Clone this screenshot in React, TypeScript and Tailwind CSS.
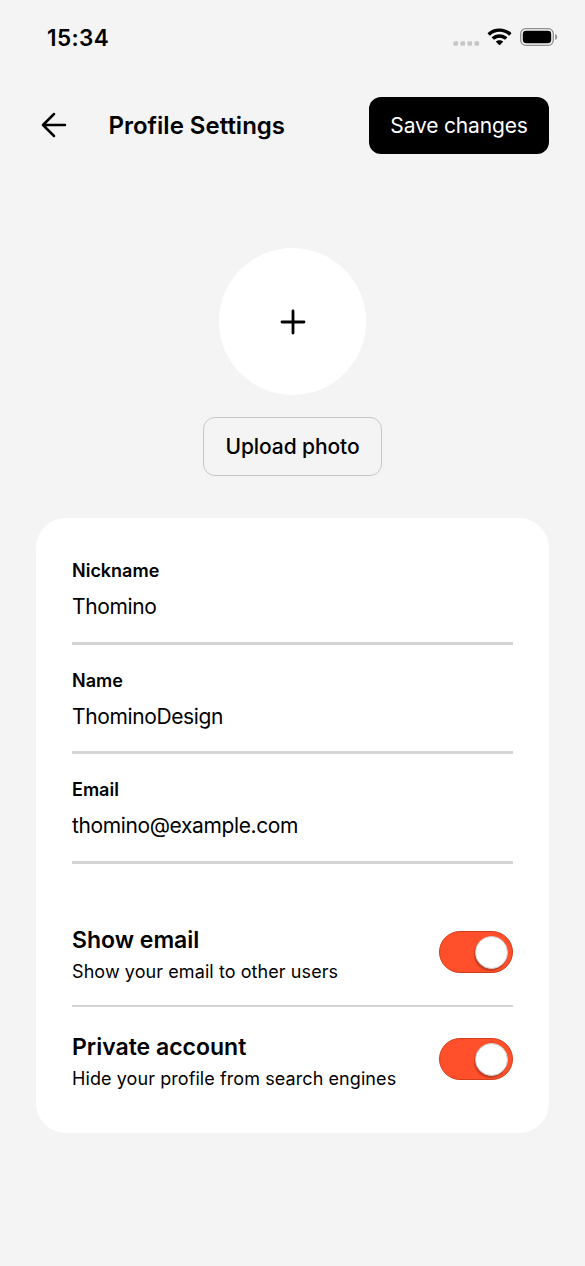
import React, { useState } from "react";

/* ---------------- TYPES ---------------- */

type Profile = {
  nickname: string;
  name: string;
  email: string;
};

/* ---------------- COMPONENT ---------------- */

export default function ProfileSettings() {
  const [profile, setProfile] = useState<Profile>({
    nickname: "Thomino",
    name: "ThominoDesign",
    email: "thomino@example.com",
  });
  const [showEmail, setShowEmail] = useState(true);
  const [privateAccount, setPrivateAccount] = useState(true);

  const update = (key: keyof Profile) => (value: string) =>
    setProfile((p) => ({ ...p, [key]: value }));

  return (
    <div className="flex min-h-screen w-full flex-col bg-[#f4f4f4] font-['Inter','Liberation_Sans',sans-serif] text-black">
      <StatusBar />

      <header className="mt-[22.5px] flex h-[57px] items-center pr-9 pl-[41px]">
        <button type="button" aria-label="Back">
          <BackIcon />
        </button>
        <h1 className="ml-[41.5px] pt-px text-[24px] leading-8 font-semibold whitespace-nowrap">
          Profile Settings
        </h1>
        <button
          type="button"
          className="ml-auto h-[57px] w-[180px] rounded-xl bg-black pt-px text-[21px] tracking-[-0.17px] whitespace-nowrap text-white"
        >
          Save changes
        </button>
      </header>

      <section className="mt-[94.5px] flex flex-col items-center">
        <button
          type="button"
          aria-label="Add photo"
          className="flex size-[147px] items-center justify-center rounded-full bg-white"
        >
          <PlusIcon />
        </button>
        <button
          type="button"
          className="mt-[22px] h-[59px] w-[179px] rounded-xl border-[1.5px] border-[#c8c8c8] text-[21px] font-medium tracking-[-0.1px] whitespace-nowrap"
        >
          Upload photo
        </button>
      </section>

      <main className="mx-9 mt-[42px] h-[615px] rounded-[30px] bg-white px-9 pt-[38px]">
        <Field
          label="Nickname"
          value={profile.nickname}
          onChange={update("nickname")}
        />
        <Field label="Name" value={profile.name} onChange={update("name")} />
        <Field label="Email" value={profile.email} onChange={update("email")} />

        <div className="mt-9">
          <ToggleRow
            title="Show email"
            description="Show your email to other users"
            checked={showEmail}
            onChange={setShowEmail}
          />
          <div className="h-[1.5px] bg-[#d4d4d4]" />
          <ToggleRow
            title="Private account"
            description="Hide your profile from search engines"
            checked={privateAccount}
            onChange={setPrivateAccount}
          />
        </div>
      </main>
    </div>
  );
}

/* ---------------- HELPERS ---------------- */

function Field({
  label,
  value,
  onChange,
}: {
  label: string;
  value: string;
  onChange: (v: string) => void;
}) {
  return (
    <label className="mb-[21px] flex h-[88.5px] flex-col border-b-[3px] border-[#d4d4d4]">
      <span className="h-[30px] text-[18px] leading-[30px] font-semibold">
        {label}
      </span>
      <input
        className="h-[41px] w-full bg-transparent text-[21px] tracking-[-0.38px] outline-none"
        value={value}
        onChange={(e) => onChange(e.target.value)}
      />
    </label>
  );
}

function ToggleRow({
  title,
  description,
  checked,
  onChange,
}: {
  title: string;
  description: string;
  checked: boolean;
  onChange: (v: boolean) => void;
}) {
  return (
    <div className="flex h-[105.5px] items-center justify-between">
      <div className="pt-[7px] whitespace-nowrap">
        <p className="text-[23px] leading-8 font-semibold">{title}</p>
        <p className="text-[18px] leading-8 tracking-[0.08px]">{description}</p>
      </div>
      <button
        type="button"
        role="switch"
        aria-checked={checked}
        aria-label={title}
        onClick={() => onChange(!checked)}
        className={`flex h-[42px] w-[74px] items-center rounded-full border px-[4px] ${
          checked
            ? "justify-end border-[#d33f1d] bg-[#ff4f2b]"
            : "border-[#bbbbbb] bg-[#d4d4d4]"
        }`}
      >
        <span className="size-[33px] rounded-full border border-[#cfcfcf] bg-white shadow-[-1px_2px_1px_rgba(0,0,0,0.22)]" />
      </button>
    </div>
  );
}

function StatusBar() {
  return (
    <div className="flex h-[74px] items-center pr-[27px] pl-[47px]">
      <span className="pt-px text-[22.5px] font-semibold tracking-[0.4px]">
        15:34
      </span>
      <div className="ml-auto flex items-center">
        <svg width="27" height="5" className="mt-[12px] mr-[7px]" fill="#c6c6c6">
          <rect x="0.5" y="0.2" width="4.6" height="4.6" rx="1.3" />
          <rect x="7.5" y="0.2" width="4.6" height="4.6" rx="1.3" />
          <rect x="14.5" y="0.2" width="4.6" height="4.6" rx="1.3" />
          <rect x="21.5" y="0.2" width="4.6" height="4.6" rx="1.3" />
        </svg>
        <svg width="25" height="18" viewBox="0 0 25 19" preserveAspectRatio="none">
          <path d="M12.5 0.5c4.6 0 8.8 1.8 11.8 4.7.2.2.2.5 0 .7l-1.8 1.9c-.2.2-.5.2-.7 0A13.4 13.4 0 0 0 3.2 7.8c-.2.2-.5.2-.7 0L.7 5.9c-.2-.2-.2-.5 0-.7A17 17 0 0 1 12.5 .5z" />
          <path d="M12.5 6.6c2.9 0 5.6 1.1 7.6 3 .2.2.2.5 0 .7l-1.9 1.9c-.2.2-.5.2-.7 0a7.3 7.3 0 0 0-10 0c-.2.2-.5.2-.7 0l-1.9-1.9c-.2-.2-.2-.5 0-.7 2-1.9 4.7-3 7.6-3z" />
          <path d="M12.5 12.8c1.3 0 2.5.5 3.4 1.3.2.2.2.5 0 .7l-3 3.1c-.2.2-.6.2-.8 0l-3-3.1c-.2-.2-.2-.5 0-.7.9-.8 2.1-1.3 3.4-1.3z" />
        </svg>
        <svg width="38" height="18" viewBox="0 0 38 18" className="ml-[8px]">
          <rect
            x="0.7"
            y="0.7"
            width="32.6"
            height="16.6"
            rx="5"
            fill="none"
            stroke="#8f8f8f"
            strokeWidth="1.3"
          />
          <rect x="2.8" y="2.8" width="28.4" height="12.4" rx="3.4" />
          <path d="M35.2 6v6c1.3-.5 2-1.7 2-3s-.7-2.5-2-3z" fill="#8f8f8f" />
        </svg>
      </div>
    </div>
  );
}

function BackIcon() {
  return (
    <svg
      width="26"
      height="26"
      viewBox="0 0 26 26"
      fill="none"
      stroke="black"
      strokeWidth="2.5"
      strokeLinecap="round"
      strokeLinejoin="round"
    >
      <path d="M13 2 2 13l11 11M2 13h22" />
    </svg>
  );
}

function PlusIcon() {
  return (
    <svg
      width="26"
      height="26"
      viewBox="0 0 26 26"
      fill="none"
      stroke="black"
      strokeWidth="2.8"
      strokeLinecap="round"
    >
      <path d="M13 2v22M2 13h22" />
    </svg>
  );
}
